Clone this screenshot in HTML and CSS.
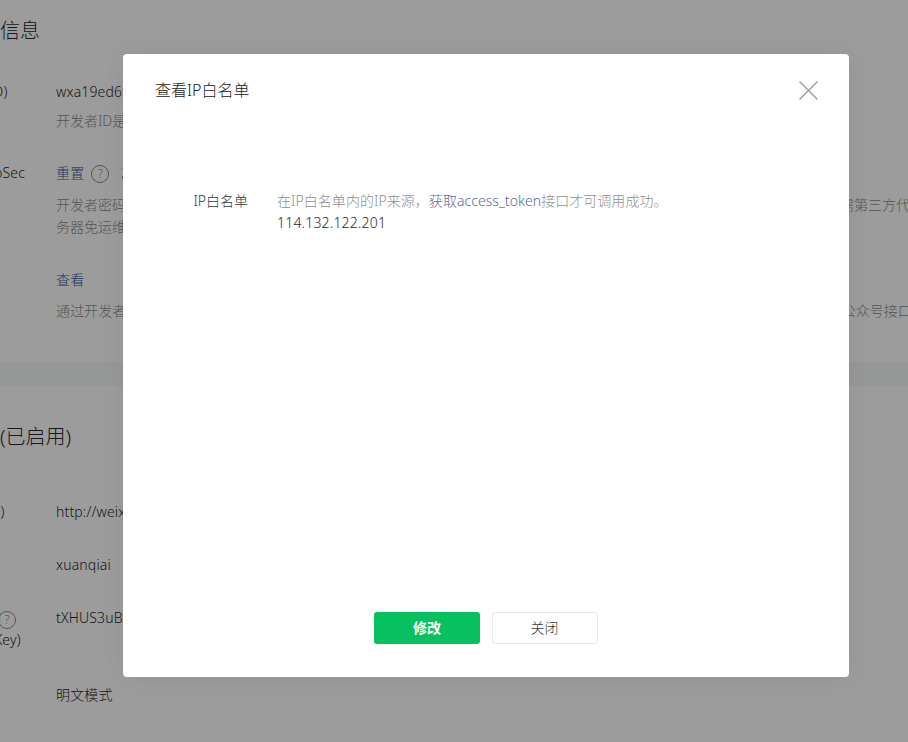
FILE: index.html
```html
<!DOCTYPE html>
<html lang="zh-CN">
<head>
<meta charset="utf-8">
<title>查看IP白名单</title>
<link rel="stylesheet" href="styles.css">
</head>
<body>
<main class="page">
  <section class="section section-first">
    <h2 class="section-title">公众号开发信息</h2>
    <div class="row row-id">
      <div class="label">开发者ID(AppID)</div>
      <div class="value">
        <div class="line">wxa19ed6f1c3b8d2e7</div>
        <div class="desc desc-gap-a">开发者ID是公众号开发识别码，配合开发者密码可调用公众号的接口能力。</div>
      </div>
    </div>
    <div class="row row-secret">
      <div class="label">开发者密码(AppSec</div>
      <div class="value">
        <div class="line"><a class="link">重置</a><span class="help help-inline">?</span><span class="secret">2026-01-12 已启用</span></div>
        <div class="desc desc-gap-b">开发者密码是校验公众号开发者身份的密码，具有极高的安全性。切记勿把密码直接交给第三方开发者或直接存储在代码中。如需第三方代替公众号开发接口<br>务器免运维的第三方平台进行开发。</div>
      </div>
    </div>
    <div class="row row-ip">
      <div class="label">IP白名单</div>
      <div class="value">
        <div class="line"><a class="link">查看</a></div>
        <div class="desc desc-gap-a">通过开发者ID及密码调用获取access_token接口时，需要设置访问来源IP为白名单，否则将无法调用此接口。开发者可在此调用公众号接口</div>
      </div>
    </div>
  </section>
  <div class="band"></div>
  <section class="section section-second">
    <h2 class="section-title">服务器配置(已启用)</h2>
    <div class="row row-url">
      <div class="label label-tight">URL(服务器地址)</div>
      <div class="value"><div class="line">http://weixin.example.com/api/callback</div></div>
    </div>
    <div class="row row-plain">
      <div class="label">令牌(Token)</div>
      <div class="value"><div class="line">xuanqiai</div></div>
    </div>
    <div class="row row-plain">
      <div class="label label-wrap">
        <div>消息加解密密钥<span class="help help-label">?</span></div>
        <div class="label-second">(EncodingAESKey)</div>
      </div>
      <div class="value"><div class="line">tXHUS3uBq8mKv2ZpLw7NfYc4RdJe</div></div>
    </div>
    <div class="row row-mode">
      <div class="label label-tight">消息加解密方式</div>
      <div class="value"><div class="line">明文模式</div></div>
    </div>
  </section>
</main>

<div class="overlay">
  <div class="modal">
    <header class="modal-head">
      <h3 class="modal-title">查看IP白名单</h3>
      <button class="modal-close" type="button" aria-label="关闭">
        <svg width="19" height="19" viewBox="0 0 19 19" fill="none" stroke="#9a9a9a" stroke-width="1.4"><path d="M.5.5l18 18M18.5.5l-18 18"/></svg>
      </button>
    </header>
    <div class="modal-body">
      <div class="modal-label">IP白名单</div>
      <div class="modal-value">
        <div class="modal-tip">在IP白名单内的IP来源，<a class="link">获取access_token</a>接口才可调用成功。</div>
        <div class="modal-ip">114.132.122.201</div>
      </div>
    </div>
    <footer class="modal-foot">
      <button class="btn btn-primary" type="button">修改</button>
      <button class="btn btn-default" type="button">关闭</button>
    </footer>
  </div>
</div>
</body>
</html>
```
FILE: styles.css
```css
* { box-sizing: border-box; }
html, body { margin: 0; padding: 0; height: 742px; overflow: hidden; background: #fff; }
body {
  font-family: "Noto Sans", "Noto Sans CJK SC", sans-serif;
  font-size: 14px;
  font-weight: 300;
  line-height: 22px;
  color: #2a2a2a;
  position: relative;
}
.page { width: 1400px; margin-left: -100px; }
.section-first { padding-top: 16px; height: 362px; }
.section-second { padding-top: 36px; }
.band { height: 24px; background: #f6f8f9; }
.section-title { margin: 0; font-size: 20px; font-weight: 300; line-height: 30px; }
.row { display: grid; grid-template-columns: 156px 1fr; }
.row-id { margin-top: 35px; }
.row-secret { margin-top: 30px; }
.row-ip { margin-top: 31px; }
.row-url { margin-top: 49px; }
.row-plain { margin-top: 31px; }
.row-mode { margin-top: 33px; }
.label { min-width: 0; padding-left: 2px; letter-spacing: .15px; white-space: nowrap; }
.label-tight { letter-spacing: 0; padding-left: 1px; }
.value { min-width: 0; }
.line, .desc { white-space: nowrap; }
.line { letter-spacing: .15px; }
.desc { color: #8c8c8c; }
.desc-gap-a { margin-top: 7px; }
.desc-gap-b { margin-top: 10px; }
.row-ip .desc-gap-a { margin-top: 9px; letter-spacing: .05px; }
.link { color: #3b5590; text-decoration: none; }
.help {
  display: inline-flex; align-items: center; justify-content: center;
  width: 18px; height: 18px; border: 1px solid #8c8c8c; border-radius: 50%;
  color: #8c8c8c; font-size: 12px; line-height: 16px;
}
.help-inline { margin: 0 12px 0 7px; vertical-align: 0; }
.help-label { margin-left: -3px; vertical-align: -1px; }
.label-second { margin-left: 3px; }
.overlay {
  position: absolute; inset: 0;
  background: rgba(0, 0, 0, .39);
  display: flex; align-items: flex-start;
  padding: 54px 0 0 123px;
}
.modal {
  width: 726px; height: 623px;
  background: #fff; border-radius: 4px;
  display: flex; flex-direction: column;
  box-shadow: 0 0 24px rgba(0, 0, 0, .06);
}
.modal-head {
  display: flex; align-items: center; justify-content: space-between;
  padding: 25px 31px 0 32px;
}
.modal-title { margin: 0; font-size: 16px; font-weight: 300; line-height: 22px; color: #222; }
.modal-close { padding: 0; border: 0; background: none; display: flex; }
.modal-body { display: flex; margin-top: 89px; flex: 1; }
.modal-label { width: 125px; text-align: right; color: #353535; }
.modal-value { margin-left: 29px; }
.modal-tip { color: #8f8f8f; letter-spacing: .05px; }
.modal-tip .link { color: #576b95; }
.modal-ip { letter-spacing: .2px; }
.modal-foot { display: flex; justify-content: center; gap: 12px; padding-bottom: 33px; margin-left: -1px; }
.btn {
  width: 106px; height: 32px; border-radius: 3px;
  font: inherit; font-size: 14px; line-height: 20px; padding: 0; cursor: pointer;
}
.btn-primary { background: #07c160; border: 0; color: #fff; font-weight: 700; padding-left: 1px; }
.btn-default { background: #fff; border: 1px solid #e7e7e7; color: #353535; }
```
